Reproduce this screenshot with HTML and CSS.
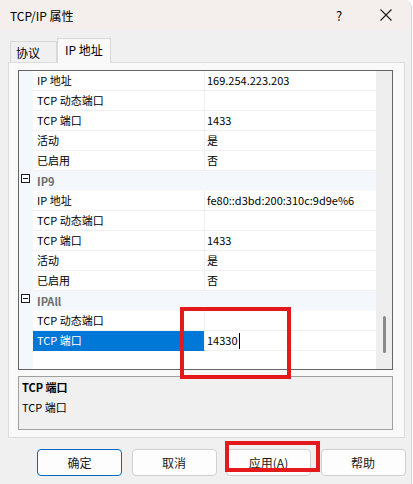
FILE: index.html
```html
<!DOCTYPE html>
<html lang="zh-CN">
<head>
    <meta charset="UTF-8">
    <title>TCP/IP 属性</title>
    <link rel="stylesheet" href="styles.css">
</head>
<body>
    <div class="window">
        <div class="titlebar">
            <span class="title">TCP/IP 属性</span>
            <span class="help">?</span>
            <span class="close">
                <svg width="12" height="12" viewBox="0 0 12 12"><path d="M0.5 0.5 L11.5 11.5 M11.5 0.5 L0.5 11.5" stroke="#1a1a1a" stroke-width="1.1" fill="none"/></svg>
            </span>
        </div>
        <div class="tabs">
            <div class="tab">协议</div>
            <div class="tab active">IP 地址</div>
        </div>
        <div class="panel">
            <div class="grid">
                <div class="rows">
                    <div class="row"><div class="gut"></div><div class="name">IP 地址</div><div class="val">169.254.223.203</div></div>
                    <div class="row"><div class="gut"></div><div class="name">TCP 动态端口</div><div class="val"></div></div>
                    <div class="row"><div class="gut"></div><div class="name">TCP 端口</div><div class="val">1433</div></div>
                    <div class="row"><div class="gut"></div><div class="name">活动</div><div class="val">是</div></div>
                    <div class="row"><div class="gut"></div><div class="name">已启用</div><div class="val">否</div></div>
                    <div class="row cat"><div class="gut"><span class="minus"></span></div><div class="catname">IP9</div></div>
                    <div class="row"><div class="gut"></div><div class="name">IP 地址</div><div class="val">fe80::d3bd:200:310c:9d9e%6</div></div>
                    <div class="row"><div class="gut"></div><div class="name">TCP 动态端口</div><div class="val"></div></div>
                    <div class="row"><div class="gut"></div><div class="name">TCP 端口</div><div class="val">1433</div></div>
                    <div class="row"><div class="gut"></div><div class="name">活动</div><div class="val">是</div></div>
                    <div class="row"><div class="gut"></div><div class="name">已启用</div><div class="val">否</div></div>
                    <div class="row cat"><div class="gut"><span class="minus"></span></div><div class="catname">IPAll</div></div>
                    <div class="row"><div class="gut"></div><div class="name">TCP 动态端口</div><div class="val"></div></div>
                    <div class="row"><div class="gut"></div><div class="name selected">TCP 端口</div><div class="val">14330<span class="caret"></span></div></div>
                </div>
                <div class="scrollbar"><div class="thumb"></div></div>
            </div>
            <div class="desc">
                <div class="desc-title">TCP 端口</div>
                <div class="desc-text">TCP 端口</div>
            </div>
        </div>
        <div class="buttons">
            <button type="button" class="btn default">确定</button>
            <button type="button" class="btn">取消</button>
            <button type="button" class="btn">应用(A)</button>
            <button type="button" class="btn">帮助</button>
        </div>
        <div class="mark mark-port"></div>
        <div class="mark mark-apply"></div>
    </div>
</body>
</html>
```

FILE: styles.css
```css
*{
    margin:0;
    padding:0;
    box-sizing: border-box;
}
body{
    background: #fff;
    font-family: "Microsoft YaHei UI", "Noto Sans CJK SC", sans-serif;
    font-size: 12px;
    color: #000;
}
.window{
    width: 412px;
    height: 484px;
    background: #f0f0f0;
    position: relative;
    border-top-right-radius: 8px;
    border-right: 1px solid #d6d6d6;
    overflow: hidden;
}
.titlebar{
    height: 30px;
    background: #f4eeed;
    display: flex;
    align-items: center;
    padding-left: 10px;
}
.title{
    flex: 1;
}
.help{
    width: 14px;
    margin-right: 30px;
    font-size: 13px;
}
.close{
    width: 12px;
    height: 12px;
    margin-right: 19px;
    display: flex;
}
.tabs{
    height: 32px;
    display: flex;
    align-items: flex-end;
    padding-left: 10px;
}
.tab{
    height: 21px;
    width: 47px;
    border: 1px solid #d9d9d9;
    border-bottom: 0;
    background: #f0f0f0;
    padding-left: 5px;
    line-height: 21px;
}
.tab.active{
    height: 25px;
    width: 54px;
    margin-bottom: -1px;
    background: #f9f9f9;
    padding-left: 7px;
    line-height: 22px;
    position: relative;
    z-index: 1;
}
.panel{
    margin-left: 8px;
    width: 397px;
    height: 376px;
    border: 1px solid #dcdcdc;
    background: #f9f9f9;
    padding: 7px 0 0 9px;
    font-size: 11px;
}
.grid{
    width: 375px;
    height: 300px;
    border: 1px solid #646464;
    background: #fff;
    display: flex;
}
.rows{
    width: 357px;
    background: #fff;
    background-image: linear-gradient(#f4f7fc, #f4f7fc);
    background-size: 14px 100%;
    background-repeat: no-repeat;
}
.row{
    height: 20px;
    display: flex;
}
.gut{
    width: 14px;
    background: #f4f7fc;
    position: relative;
}
.name{
    width: 172px;
    padding-left: 4px;
    line-height: 19px;
    border-bottom: 1px solid #f0f0f0;
    border-right: 1px solid #f0f0f0;
    white-space: nowrap;
}
.name.selected{
    background: #0078d7;
    color: #fff;
    border-bottom-color: #0078d7;
}
.val{
    flex: 1;
    padding-left: 2px;
    line-height: 19px;
    border-bottom: 1px solid #f0f0f0;
    white-space: nowrap;
    display: flex;
    align-items: center;
}
.caret{
    width: 1px;
    height: 16px;
    background: #000;
    margin-left: 1px;
}
.row.cat{
    background: #f4f7fc;
}
.catname{
    flex: 1;
    padding-left: 4px;
    line-height: 21px;
    font-weight: bold;
    color: #6d6d6d;
    border-bottom: 1px solid #fafbfd;
}
.minus{
    position: absolute;
    left: 2px;
    top: 3px;
    width: 9px;
    height: 9px;
    border: 1px solid #1a1a1a;
    background: #fff;
}
.minus::after{
    content: "";
    position: absolute;
    left: 1px;
    top: 3px;
    width: 5px;
    height: 1px;
    background: #1a1a1a;
}
.scrollbar{
    width: 16px;
    background: #eeeeee;
    display: flex;
    justify-content: center;
    padding-top: 245px;
}
.thumb{
    width: 3px;
    height: 37px;
    background: #8a8a8a;
    border-radius: 2px;
    margin-left: 1px;
}
.desc{
    width: 375px;
    height: 54px;
    margin-top: 6px;
    border: 1px solid #a0a0a0;
    background: #f0f0f0;
    padding: 2px 0 0 3px;
}
.desc-title{
    font-weight: bold;
    line-height: 17px;
}
.desc-text{
    line-height: 22px;
}
.buttons{
    display: flex;
    gap: 9.5px;
    padding: 11px 0 0 37px;
}
.btn{
    width: 85px;
    height: 27px;
    border: 1px solid #d0d0d0;
    border-radius: 4px;
    background: #fdfdfd;
    font-family: inherit;
    font-size: 12px;
    color: #1a1a1a;
}
.btn.default{
    border: 1px solid #0067c0;
}
.mark{
    position: absolute;
    border: 4px solid #e3191c;
}
.mark-port{
    left: 180px;
    top: 307px;
    width: 111px;
    height: 72px;
}
.mark-apply{
    left: 225px;
    top: 441px;
    width: 95px;
    height: 31px;
}
```
